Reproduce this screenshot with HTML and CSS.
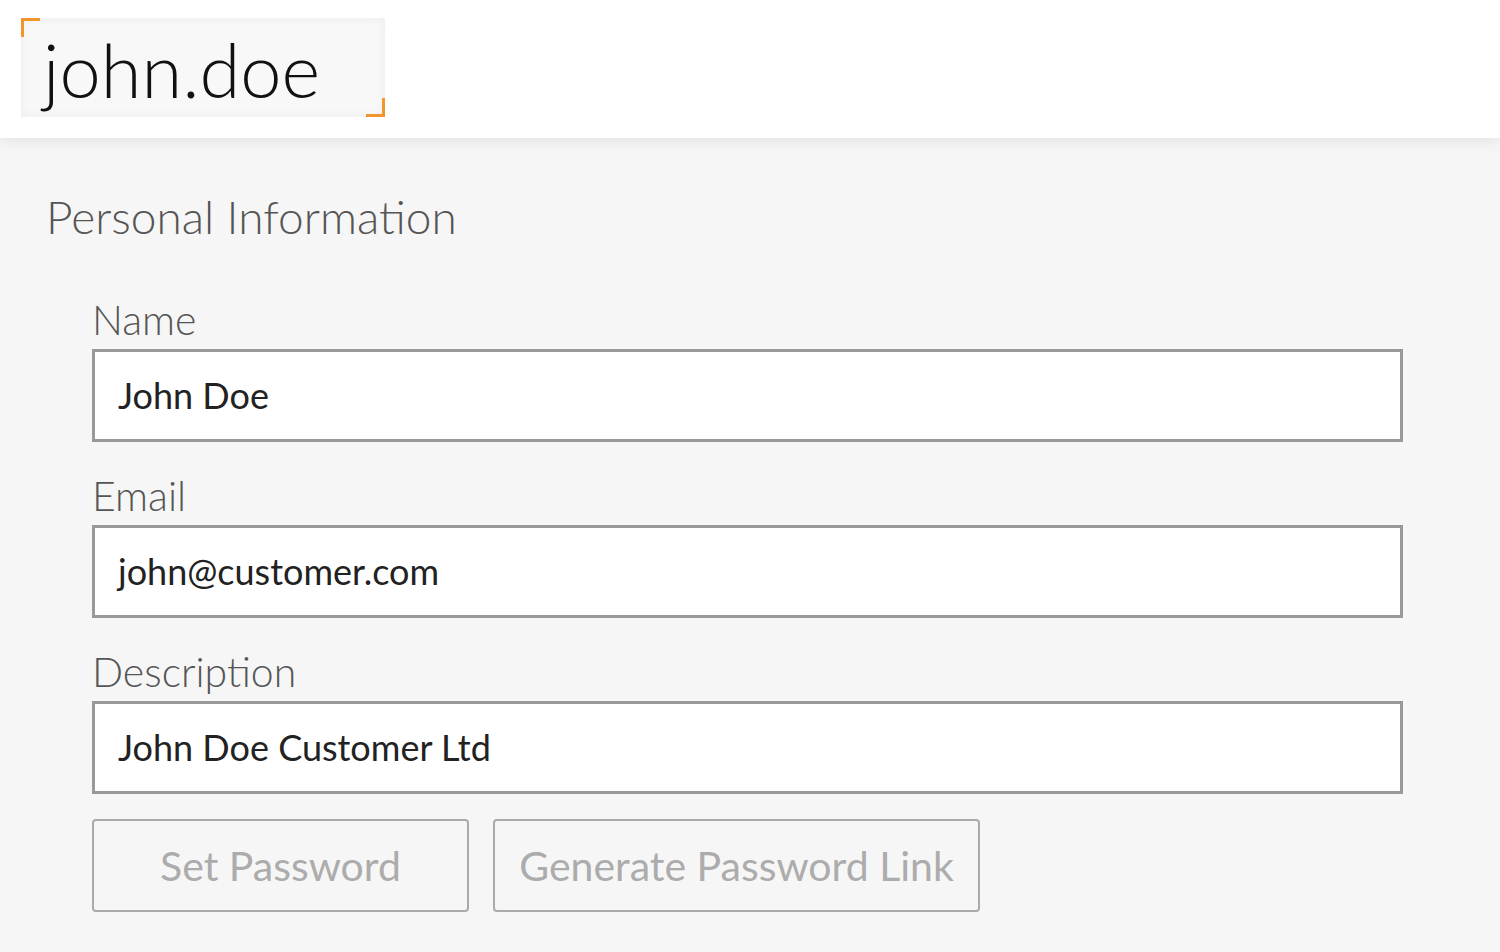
FILE: index.html
```html
<!DOCTYPE html>
<html>
<head>
<meta charset="utf-8">
<link rel="stylesheet" href="styles.css">
</head>
<body>
<header class="topbar">
  <div class="userbox">
    <span class="corner corner-tl"></span>
    <span class="username">john.doe</span>
    <span class="corner corner-br"></span>
  </div>
</header>
<main class="content">
  <h1 class="section-title">Personal Information</h1>
  <form class="form">
    <div class="field">
      <label class="field-label">Name</label>
      <div class="field-input">John Doe</div>
    </div>
    <div class="field">
      <label class="field-label">Email</label>
      <div class="field-input">john@customer.com</div>
    </div>
    <div class="field">
      <label class="field-label">Description</label>
      <div class="field-input">John Doe Customer Ltd</div>
    </div>
    <div class="actions">
      <button type="button" class="btn btn-set">Set Password</button>
      <button type="button" class="btn btn-gen">Generate Password Link</button>
    </div>
  </form>
</main>
</body>
</html>
```

FILE: styles.css
```css
html, body {
  margin: 0;
  padding: 0;
}
body {
  background: #f6f6f6;
  font-family: Lato, "Open Sans", sans-serif;
  width: 1500px;
  height: 952px;
  overflow: hidden;
}
.topbar {
  height: 138px;
  background: #ffffff;
  box-shadow: 0 2px 16px rgba(0,0,0,0.09);
  position: relative;
  z-index: 1;
  padding: 18px 0 0 21px;
  box-sizing: border-box;
}
.userbox {
  position: relative;
  width: 364px;
  height: 99px;
  background: #f8f8f8;
  box-shadow: inset 0 0 12px rgba(0,0,0,0.05);
  box-sizing: border-box;
  padding-left: 22px;
}
.username {
  display: block;
  font-family: Lato, sans-serif;
  font-weight: 300;
  font-size: 74px;
  line-height: 99px;
  color: #111;
  position: relative;
  top: 2px;
}
.corner {
  position: absolute;
  width: 16px;
  height: 16px;
  border-color: #f0962a;
  border-style: solid;
  border-width: 0;
}
.corner-tl {
  left: 0;
  top: 0;
  border-top-width: 3px;
  border-left-width: 3px;
}
.corner-br {
  right: 0;
  bottom: 0;
  border-bottom-width: 3px;
  border-right-width: 3px;
}
.content {
  padding: 0 0 0 46px;
}
.section-title {
  margin: 0;
  padding-top: 49px;
  font-weight: 300;
  font-size: 46px;
  line-height: 60px;
  color: #555;
}
.form {
  margin: 47px 0 0 46px;
  width: 1311px;
  display: flex;
  flex-direction: column;
}
.field {
  display: flex;
  flex-direction: column;
  margin-bottom: 28px;
}
.field-label {
  font-weight: 300;
  font-size: 41px;
  line-height: 52px;
  color: #555;
  margin-bottom: 3px;
}
.field-input {
  height: 93px;
  box-sizing: border-box;
  border: 3px solid #999;
  background: #fff;
  font-size: 36px;
  line-height: 87px;
  padding-left: 23px;
  color: #222;
}
.actions {
  display: flex;
  gap: 24px;
  margin-top: -3px;
}
.btn {
  height: 93px;
  box-sizing: border-box;
  border: 2px solid #aaa;
  border-radius: 4px;
  background: transparent;
  font-family: Lato, sans-serif;
  font-size: 41px;
  color: #acacac;
  padding: 0 24px;
}
.btn-set {
  width: 377px;
}
.btn-gen {
  width: 487px;
}
```
